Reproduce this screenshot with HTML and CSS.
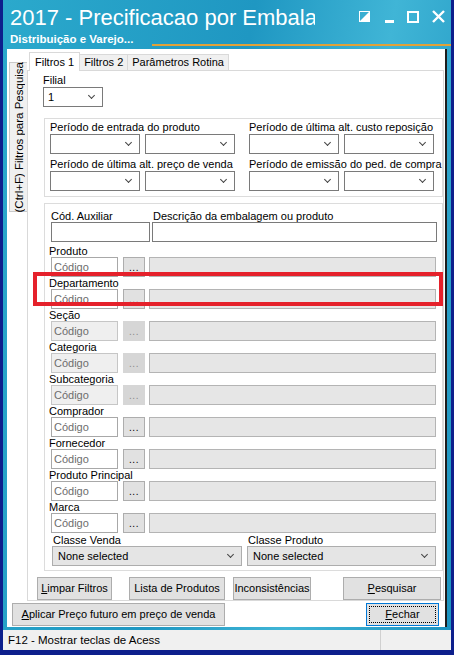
FILE: index.html
```html
<!DOCTYPE html>
<html lang="pt">
<head>
  <meta charset="UTF-8" />
  <title>2017 - Precificacao por Embalagem</title>
  <link rel="stylesheet" href="styles.css">
</head>
<body>
<div class="window">
  <div class="titlebar">
    <div class="title">2017 - Precificacao por Embalagem</div>
    <div class="controls">
      <svg width="11" height="11" viewBox="0 0 11 11"><rect x="0.5" y="0.5" width="10" height="10" fill="none" stroke="#fff"/><polygon points="0,11 11,0 11,11" fill="#fff"/></svg>
      <svg class="min" width="9" height="3" viewBox="0 0 9 3"><rect width="9" height="3" fill="#fff"/></svg>
      <svg width="12" height="12" viewBox="0 0 12 12"><rect x="1" y="1" width="10" height="10" fill="none" stroke="#fff" stroke-width="2"/></svg>
      <svg width="13" height="13" viewBox="0 0 13 13"><path d="M1 1 L12 12 M12 1 L1 12" stroke="#fff" stroke-width="2.4"/></svg>
    </div>
  </div>
  <div class="subtitle">Distribuição e Varejo...</div>

  <div class="client">
    <div class="main">
      <div class="sidetab"><span>(Ctrl+F) Filtros para Pesquisa</span></div>
      <div class="tabs">
        <div class="tabstrip">
          <div class="tab active">Filtros 1</div>
          <div class="tab">Filtros 2</div>
          <div class="tab">Parâmetros Rotina</div>
        </div>
        <div class="page">
          <div class="filial">
            <div class="lbl">Filial</div>
            <div class="combo w60"><span>1</span><i class="arrow"></i></div>
          </div>

          <div class="group periods">
            <div class="pcol">
              <div class="lbl">Período de entrada do produto</div>
              <div class="pair"><div class="combo"><i class="arrow"></i></div><div class="combo"><i class="arrow"></i></div></div>
              <div class="lbl">Período de última alt. preço de venda</div>
              <div class="pair"><div class="combo"><i class="arrow"></i></div><div class="combo"><i class="arrow"></i></div></div>
            </div>
            <div class="pcol">
              <div class="lbl">Período de última alt. custo reposição</div>
              <div class="pair"><div class="combo"><i class="arrow"></i></div><div class="combo"><i class="arrow"></i></div></div>
              <div class="lbl">Período de emissão do ped. de compra</div>
              <div class="pair"><div class="combo"><i class="arrow"></i></div><div class="combo"><i class="arrow"></i></div></div>
            </div>
          </div>

          <div class="group fields">
            <div class="auxrow">
              <div class="auxcol">
                <div class="lbl">Cód. Auxiliar</div>
                <div class="edit"></div>
              </div>
              <div class="desccol">
                <div class="lbl">Descrição da embalagem ou produto</div>
                <div class="edit"></div>
              </div>
            </div>

            <div class="frow first">
              <div class="lbl">Produto</div>
              <div class="line"><div class="code">Código</div><div class="dots">...</div><div class="wide"></div></div>
            </div>
            <div class="frow">
              <div class="lbl">Departamento</div>
              <div class="line"><div class="code">Código</div><div class="dots">...</div><div class="wide"></div></div>
            </div>
            <div class="frow off">
              <div class="lbl">Seção</div>
              <div class="line"><div class="code">Código</div><div class="dots">...</div><div class="wide"></div></div>
            </div>
            <div class="frow off">
              <div class="lbl">Categoria</div>
              <div class="line"><div class="code">Código</div><div class="dots">...</div><div class="wide"></div></div>
            </div>
            <div class="frow off">
              <div class="lbl">Subcategoria</div>
              <div class="line"><div class="code">Código</div><div class="dots">...</div><div class="wide"></div></div>
            </div>
            <div class="frow">
              <div class="lbl">Comprador</div>
              <div class="line"><div class="code">Código</div><div class="dots">...</div><div class="wide"></div></div>
            </div>
            <div class="frow">
              <div class="lbl">Fornecedor</div>
              <div class="line"><div class="code">Código</div><div class="dots">...</div><div class="wide"></div></div>
            </div>
            <div class="frow">
              <div class="lbl">Produto Principal</div>
              <div class="line"><div class="code">Código</div><div class="dots">...</div><div class="wide"></div></div>
            </div>
            <div class="frow">
              <div class="lbl">Marca</div>
              <div class="line"><div class="code">Código</div><div class="dots">...</div><div class="wide"></div></div>
            </div>

            <div class="classes">
              <div class="ccol left">
                <div class="lbl">Classe Venda</div>
                <div class="combo gray"><span>None selected</span><i class="arrow"></i></div>
              </div>
              <div class="ccol right">
                <div class="lbl">Classe Produto</div>
                <div class="combo gray"><span>None selected</span><i class="arrow"></i></div>
              </div>
            </div>
          </div>

          <div class="actions">
            <button class="btn b-limpar"><u>L</u>impar Filtros</button>
            <button class="btn b-lista">Lista de Produtos</button>
            <button class="btn b-incons">Inconsistências</button>
            <button class="btn b-pesq"><u>P</u>esquisar</button>
          </div>

          <div class="highlight"></div>
        </div>
      </div>
    </div>

    <div class="bottom">
      <button class="btn b-aplicar"><u>A</u>plicar Preço futuro em preço de venda</button>
      <button class="btn b-fechar"><span><u>F</u>echar</span></button>
    </div>
  </div>

  <div class="statusbar">
    <div class="status-text">F12 - Mostrar teclas de Acess</div>
    <div class="status-end"></div>
  </div>
</div>
</body>
</html>
```

FILE: styles.css
```css
body {
  margin: 0;
  background: #0d1f8c;
  font-family: "Liberation Sans", Arial, sans-serif;
  font-size: 11px;
  color: #000;
  width: 454px;
  height: 655px;
  overflow: hidden;
}

.window {
  margin: 0 3px;
  height: 650px;
  background: linear-gradient(100deg, #2ba9cc 0%, #1f97c2 45%, #40b5d6 70%, #1b92bf 100%);
  display: flex;
  flex-direction: column;
}

/* barra de titulo */
.titlebar {
  height: 34px;
  display: flex;
  align-items: center;
}

.title {
  width: 305px;
  padding-left: 7px;
  font-size: 22px;
  color: #fff;
  white-space: nowrap;
  overflow: hidden;
  margin-top: 2px;
}

.controls {
  margin-left: auto;
  display: flex;
  align-items: center;
  gap: 13px;
  padding-right: 6px;
}

.controls .min {
  margin-top: 9px;
  margin-left: 2px;
}

.subtitle {
  height: 15px;
  padding-left: 7px;
  font-weight: bold;
  font-size: 11.5px;
  color: #fff;
  line-height: 11px;
  position: relative;
}

.subtitle::after {
  content: "";
  position: absolute;
  left: 149px;
  right: 0;
  top: 10px;
  height: 2px;
  background: #e0a238;
}

/* area cliente */
.client {
  margin: 0 4px;
  height: 579px;
  background: #fff;
  border-right: 2px solid #1d1d1d;
  display: flex;
  flex-direction: column;
}

.main {
  display: flex;
  padding-top: 3px;
  height: 549px;
}

.sidetab {
  flex: none;
  width: 17px;
  margin: 10px 0 0 2px;
  height: 148px;
  background: #f0f0f0;
  border: 1px solid #c9c9c9;
  border-right: none;
  display: flex;
  align-items: center;
  justify-content: center;
}

.sidetab span {
  writing-mode: vertical-rl;
  transform: rotate(180deg);
  white-space: nowrap;
  font-size: 11.5px;
}

.tabs {
  flex: 1;
  display: flex;
  flex-direction: column;
  margin-right: 3px;
}

.tabstrip {
  display: flex;
  align-items: flex-end;
  height: 18px;
  padding-left: 3px;
}

.tab {
  height: 15px;
  line-height: 15px;
  padding: 0 4px;
  background: #f0f0f0;
  border: 1px solid #d9d9d9;
  border-bottom: none;
  margin-left: -1px;
}

.tab.active {
  height: 18px;
  line-height: 18px;
  background: #fff;
  padding: 0 5px;
  position: relative;
  z-index: 1;
  margin-bottom: -1px;
}

.page {
  position: relative;
  flex: 1;
  border: 1px solid #d9d9d9;
  background: #fff;
  padding: 3px 0 0 15px;
}

.lbl {
  height: 12px;
  line-height: 12px;
  white-space: nowrap;
}

.filial .lbl {
  height: 13px;
}

.combo {
  height: 18px;
  border: 1px solid #7a7a7a;
  background: #fff;
  display: flex;
  align-items: center;
  padding-left: 4px;
  position: relative;
}

.combo.w60 {
  width: 54px;
}

.arrow {
  position: absolute;
  right: 8px;
  top: 5px;
  width: 4px;
  height: 4px;
  border-right: 1px solid #444;
  border-bottom: 1px solid #444;
  transform: rotate(45deg);
}

/* grupo de periodos */
.group {
  border: 1px solid #dcdcdc;
}

.periods {
  margin-top: 11px;
  margin-left: 1px;
  height: 75px;
  display: flex;
  padding: 2px 0 0 5px;
  gap: 14px;
}

.pcol .lbl {
  height: 13px;
  line-height: 13px;
}

.pcol .lbl + .pair + .lbl {
  margin-top: 4px;
}

.pair {
  display: flex;
  gap: 5px;
}

.pair .combo {
  width: 84px;
}

/* grupo de campos */
.fields {
  margin-top: 6px;
  margin-left: 1px;
  height: 360px;
  padding: 6px 0 0 4px;
}

.auxrow {
  display: flex;
  gap: 2px;
  padding-left: 2px;
}

.auxcol .edit {
  width: 97px;
}

.desccol {
  flex: 1;
  margin-right: 5px;
}

.desccol .lbl {
  padding-left: 1px;
}

.edit {
  height: 18px;
  border: 1px solid #7a7a7a;
  background: #fff;
}

.frow.first {
  margin-top: 3px;
}

.line {
  display: flex;
  height: 20px;
  padding-left: 2px;
}

.code {
  width: 63px;
  border: 1px solid #a8a8a8;
  background: #fff;
  color: #6d6d6d;
  padding-left: 2px;
  line-height: 18px;
}

.dots {
  width: 20px;
  margin-left: 5px;
  border: 1px solid #adadad;
  background: #e1e1e1;
  text-align: center;
  line-height: 19px;
  font-size: 10px;
  letter-spacing: 0.5px;
}

.wide {
  flex: 1;
  margin: 0 6px 0 4px;
  border: 1px solid #b4b4b4;
  background: #e6e6e6;
}

.frow.off .code {
  background: #efefef;
  border-color: #c6c6c6;
}

.frow.off .dots {
  background: #d6d6d6;
  border-color: #d6d6d6;
  color: #8a8a8a;
}

.classes {
  display: flex;
  margin-top: 1px;
}

.ccol.left {
  width: 190px;
  padding-left: 3px;
}

.ccol.right {
  flex: 1;
  margin-left: 5px;
  margin-right: 6px;
}

.ccol .lbl {
  padding-left: 1px;
}

.combo.gray {
  background: #e5e5e5;
  border-color: #adadad;
  padding-left: 5px;
}

/* botoes */
.btn {
  box-sizing: border-box;
  font-family: inherit;
  font-size: 11px;
  height: 23px;
  background: #e1e1e1;
  border: 1px solid #adadad;
  padding: 0;
  color: #000;
}

.actions {
  display: flex;
  margin-top: 6px;
  margin-left: -6px;
}

.b-limpar { width: 75px; }
.b-lista { width: 96px; margin-left: 17px; }
.b-incons { width: 78px; margin-left: 8px; }
.b-pesq { width: 98px; margin-left: 32px; }

.highlight {
  position: absolute;
  left: 5px;
  top: 201px;
  width: 402px;
  height: 26px;
  border: 4px solid #e5212b;
}

.bottom {
  display: flex;
  justify-content: space-between;
  padding: 2px 6px 0 5px;
}

.b-aplicar {
  width: 213px;
}

.b-fechar {
  width: 73px;
  border: 1px solid #0078d7;
  padding: 2px;
}

.b-fechar span {
  display: block;
  height: 15px;
  line-height: 15px;
  border: 1px dotted #000;
}

/* barra de status */
.statusbar {
  margin-top: 3px;
  height: 20px;
  background: #f0f0f0;
  display: flex;
  align-items: center;
  font-size: 11.5px;
}

.status-text {
  width: 372px;
  padding-left: 5px;
  border-right: 1px solid #d0d0d0;
  height: 20px;
  line-height: 20px;
}
```
